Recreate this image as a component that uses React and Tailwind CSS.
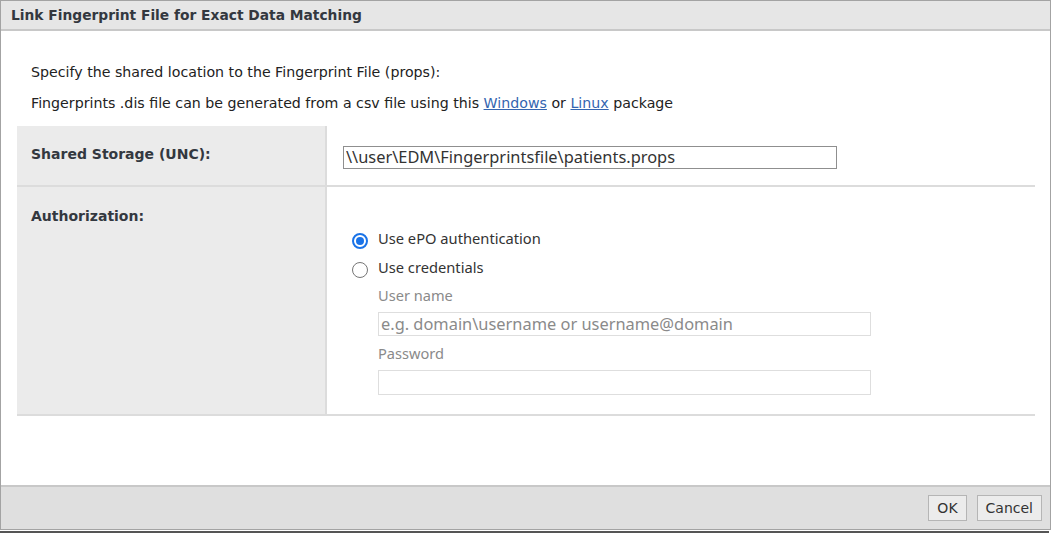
import { useState } from "react";

const labelFont = { fontFamily: '"DejaVu Sans", Verdana, sans-serif' };

function Radio({ checked, onChange, children }) {
  return (
    <label className="flex items-center gap-[10px] cursor-pointer h-[29px]">
      <span
        onClick={onChange}
        className={
          checked
            ? "w-[16px] h-[16px] rounded-full border-[2px] border-[#1a73e8] flex items-center justify-center mt-[4px]"
            : "w-[16px] h-[16px] rounded-full border border-[#767676] mt-[4px]"
        }
      >
        {checked && <span className="w-[8px] h-[8px] rounded-full bg-[#1a73e8]" />}
      </span>
      <span className="text-[14.7px] text-[#333]">{children}</span>
    </label>
  );
}

export default function App() {
  const [auth, setAuth] = useState("epo");
  const [storage, setStorage] = useState("\\\\user\\EDM\\Fingerprintsfile\\patients.props");

  return (
    <div
      className="w-[1052px] h-[537px] bg-white flex flex-col"
      style={{ fontFamily: '"Noto Sans", "Open Sans", sans-serif' }}
    >
      <div className="w-[1051px] h-[530px] border border-[#a3a3a3] flex flex-col">
        {/* title bar */}
        <div className="h-[30px] bg-[#e6e6e6] border-b-2 border-[#c8c8c8] flex items-center px-[10px]">
          <span className="text-[13.8px] font-bold text-[#33383f]" style={labelFont}>
            Link Fingerprint File for Exact Data Matching
          </span>
        </div>

        {/* body */}
        <div className="flex-1 px-[16px]">
          <div className="pt-[31px] pl-[14px] text-[14.2px] text-[#222]" style={labelFont}>
            <p className="h-[20px] leading-[20px]">Specify the shared location to the Fingerprint File (props):</p>
            <p className="h-[20px] leading-[20px] mt-[11px]">
              Fingerprints .dis file can be generated from a csv file using this{" "}
              <a href="#" className="underline text-[#3565b0]">Windows</a> or{" "}
              <a href="#" className="underline text-[#3565b0]">Linux</a> package
            </p>
          </div>

          <div className="mt-[13px] w-[1018px]">
            <div className="flex border-b-2 border-[#dcdcdc] h-[61px]">
              <div className="w-[310px] bg-[#ebebeb] border-r-2 border-[#dcdcdc] pl-[14px] pt-[15px]">
                <span className="text-[14px] font-bold text-[#33383f]" style={labelFont}>
                  Shared Storage (UNC):
                </span>
              </div>
              <div className="flex-1 pl-[16px] pt-[19px]">
                <input
                  value={storage}
                  onChange={(e) => setStorage(e.target.value)}
                  className="w-[494px] h-[23px] border border-[#8f8f8f] px-[2px] text-[16.4px] text-[#333] outline-none"
                />
              </div>
            </div>

            <div className="flex border-b-2 border-[#dcdcdc] h-[229px]">
              <div className="w-[310px] bg-[#ebebeb] border-r-2 border-[#dcdcdc] pl-[14px] pt-[16px]">
                <span className="text-[14px] font-bold text-[#33383f]" style={labelFont}>
                  Authorization:
                </span>
              </div>
              <div className="flex-1 pl-[25px] pt-[37px]">
                <Radio checked={auth === "epo"} onChange={() => setAuth("epo")}>
                  Use ePO authentication
                </Radio>
                <Radio checked={auth === "cred"} onChange={() => setAuth("cred")}>
                  Use credentials
                </Radio>
                <div className="pl-[26px]">
                  <div className="text-[14.6px] text-[#8a8a8a] h-[26px] leading-[26px]">User name</div>
                  <input
                    placeholder="e.g. domain\username or username@domain"
                    className="mt-[4px] w-[493px] h-[24px] border border-[#dedede] px-[2px] text-[16.4px] placeholder:text-[#8a8a8a] outline-none"
                  />
                  <div className="text-[14.6px] text-[#8a8a8a] h-[34px] leading-[34px]">Password</div>
                  <input
                    type="password"
                    className="w-[493px] h-[25px] border border-[#dedede] px-[2px] text-[15px] outline-none"
                  />
                </div>
              </div>
            </div>
          </div>
        </div>

        {/* footer */}
        <div className="h-[44px] bg-[#dfdfdf] border-t-2 border-[#c8c8c8] flex items-center justify-end gap-[10px] pr-[8px]">
          <button
            className="h-[26px] px-[8px] bg-[#ececec] border border-[#b5b5b5] text-[14px] text-[#333]"
            style={labelFont}
          >
            OK
          </button>
          <button
            className="h-[26px] px-[8px] bg-[#ececec] border border-[#b5b5b5] text-[14px] text-[#333]"
            style={labelFont}
          >
            Cancel
          </button>
        </div>
      </div>
      <div className="h-[2px] w-[1049px] bg-[#555] mt-[1px]" />
    </div>
  );
}
